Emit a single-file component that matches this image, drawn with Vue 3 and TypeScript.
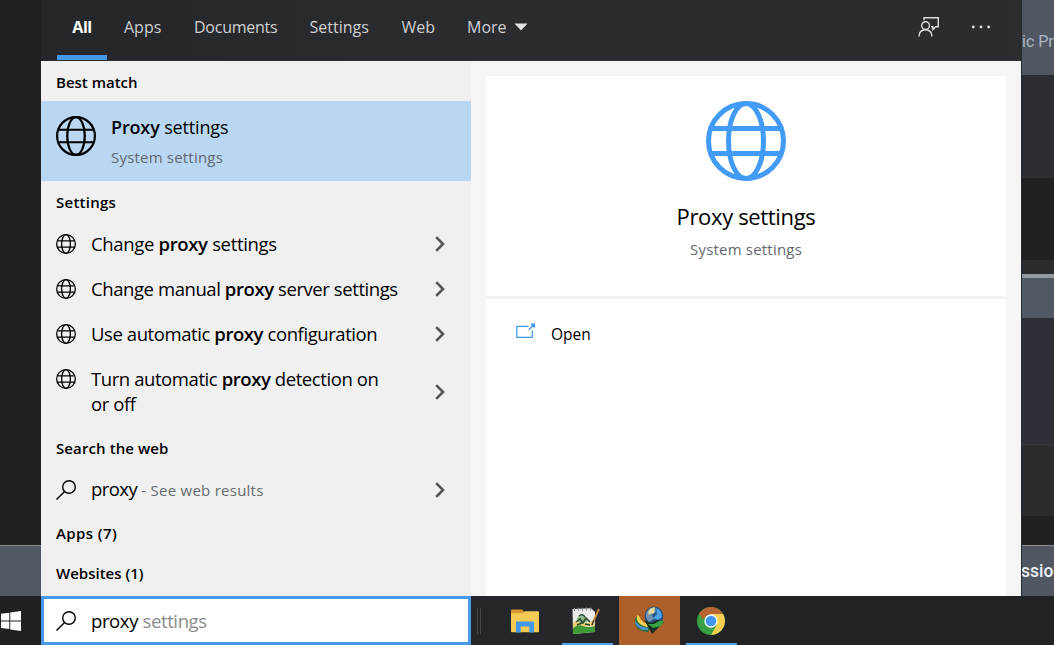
<script setup lang="ts">
import { defineComponent, h } from 'vue'

interface Tab { label: string; cls: string }
interface Result { lines: [string, string, string]; tail?: string; cls: string }

const tabs: Tab[] = [
  { label: 'All', cls: 'all' },
  { label: 'Apps', cls: 'apps' },
  { label: 'Documents', cls: 'documents' },
  { label: 'Settings', cls: 'settings' },
  { label: 'Web', cls: 'web' },
  { label: 'More', cls: 'more' },
]

const results: Result[] = [
  { lines: ['Change ', 'proxy', ' settings'], cls: 'r1' },
  { lines: ['Change manual ', 'proxy', ' server settings'], cls: 'r2' },
  { lines: ['Use automatic ', 'proxy', ' configuration'], cls: 'r3' },
  { lines: ['Turn automatic ', 'proxy', ' detection on'], tail: 'or off', cls: 'r4' },
]

const GlobeIcon = defineComponent({
  props: { weight: { type: Number, default: 5 } },
  setup(props) {
    return () =>
      h('svg', { viewBox: '0 0 80 80', fill: 'none', stroke: 'currentColor', 'stroke-width': props.weight }, [
        h('circle', { cx: 40, cy: 40, r: 40 - props.weight / 2 }),
        h('ellipse', { cx: 40, cy: 40, rx: 17.5, ry: 40 - props.weight / 2 }),
        h('path', { d: 'M5 27.5H75M5 52.5H75' }),
      ])
  },
})

const SearchIcon = defineComponent({
  setup() {
    return () =>
      h('svg', { viewBox: '0 0 20 20', fill: 'none', stroke: 'currentColor', 'stroke-width': 1.4 }, [
        h('circle', { cx: 13, cy: 7, r: 6.3 }),
        h('path', { d: 'M8.6 11.4L.5 19.5' }),
      ])
  },
})
</script>

<template>
  <div class="screen">
    <div class="desktop">
      <div class="backdrop-left"><div class="band"></div></div>

      <section class="flyout">
        <header class="tabs">
          <div v-for="tab in tabs" :key="tab.label" class="tab" :class="tab.cls">
            <span>{{ tab.label }}</span>
            <svg v-if="tab.label === 'More'" class="caret" viewBox="0 0 14 8"><path d="M.5.5H13.5L7 7.5Z" fill="#e4e4e4" /></svg>
          </div>
          <div class="spacer"></div>
          <svg class="feedback" viewBox="0 0 22 22" fill="none" stroke="#dcdcdc" stroke-width="1.4">
            <path d="M6 4.2V1.7H20.3V10.8H17.7L14.8 13.6V10.8H13" />
            <circle cx="7.6" cy="9.6" r="3.9" />
            <path d="M1 20.5C1.2 16.2 3.8 13.7 7.5 13.7S13.7 16.2 14 20.5" />
          </svg>
          <svg class="dots" viewBox="0 0 20 4" fill="#dcdcdc"><circle cx="2.3" cy="2" r="1.4" /><circle cx="10" cy="2" r="1.4" /><circle cx="17.7" cy="2" r="1.4" /></svg>
        </header>

        <div class="content">
          <div class="list">
            <h2 class="heading h-best">Best match</h2>
            <div class="best">
              <GlobeIcon class="globe-m" :weight="4.4" />
              <div class="best-text">
                <div class="best-title"><b>Proxy</b> settings</div>
                <div class="best-sub">System settings</div>
              </div>
            </div>
            <h2 class="heading h-settings">Settings</h2>
            <div v-for="r in results" :key="r.cls" class="row" :class="r.cls">
              <GlobeIcon class="globe-s" :weight="5.2" />
              <div class="row-text">
                <div class="line">{{ r.lines[0] }}<b>{{ r.lines[1] }}</b>{{ r.lines[2] }}</div>
                <div v-if="r.tail" class="line">{{ r.tail }}</div>
              </div>
              <svg class="chevron" viewBox="0 0 10 16" fill="none" stroke="#555" stroke-width="2.6"><path d="M1.2 1.2L8 8L1.2 14.8" /></svg>
            </div>
            <h2 class="heading h-web">Search the web</h2>
            <div class="row web-row">
              <SearchIcon class="search-s" />
              <div class="row-text"><span class="query">proxy</span><span class="hint"> - See web results</span></div>
              <svg class="chevron" viewBox="0 0 10 16" fill="none" stroke="#555" stroke-width="2.6"><path d="M1.2 1.2L8 8L1.2 14.8" /></svg>
            </div>
            <h2 class="heading h-apps">Apps (7)</h2>
            <h2 class="heading h-sites">Websites (1)</h2>
          </div>

          <div class="detail">
            <div class="card">
              <div class="hero">
                <GlobeIcon class="globe-l" :weight="5" />
                <div class="hero-title">Proxy settings</div>
                <div class="hero-sub">System settings</div>
              </div>
              <div class="action">
                <svg class="open-icon" viewBox="0 0 20 16" fill="none" stroke="#4299ea" stroke-width="1.3">
                  <path d="M12.5 3.3H.8V14.3H16.3V7.5M12.8 6.8L18.4 1.2" />
                  <path d="M14.8.6H19V4.8L17.2 4.2L15.4 2.4Z" fill="#4299ea" stroke="none" />
                </svg>
                <span>Open</span>
              </div>
            </div>
          </div>
        </div>
      </section>

      <div class="backdrop-right">
        <div class="b1"><span>ic Pr</span></div>
        <div class="b2"></div>
        <div class="b3"></div>
        <div class="b4"></div>
        <div class="b5"></div>
        <div class="b6"></div>
        <div class="b7"></div>
        <div class="b8"></div>
        <div class="b9"><span>ssio</span></div>
      </div>
    </div>

    <footer class="taskbar">
      <div class="start">
        <svg viewBox="0 0 21 21" fill="#fff"><path d="M0 3L8.7 1.8V9.9H0ZM9.7 1.6L21 0V9.9H9.7ZM0 10.9H8.7V19L0 17.8ZM9.7 10.9H21V21L9.7 19.3Z" /></svg>
      </div>
      <div class="searchbox">
        <SearchIcon class="search-s" />
        <div class="typed"><span>proxy</span><span class="ghost"> settings</span></div>
      </div>
      <div class="grip"></div>
      <div class="task explorer">
        <svg viewBox="0 0 28 24">
          <path d="M0 1.2Q0 .5.7.5H11L13.5 3V7H0Z" fill="#d99a35" />
          <path d="M0 4.3H11.5L14 2.3H27Q28 2.3 28 3.3V22.3Q28 23.3 27 23.3H1Q0 23.3 0 22.3Z" fill="#f4cc55" />
          <path d="M5 12.6H23V23.5H18.3V17.5H9.7V23.5H5Z" fill="#4299e8" />
        </svg>
      </div>
      <div class="task notepad running">
        <svg viewBox="0 0 28 28">
          <path d="M.5 2L19 1.2L23 5V25L1 27Z" fill="#e9eceb" />
          <path d="M2.5 1V4M6.5 .7V3.7M10.5 .7V3.7M14.5 .5V3.5M18.5 .5V3.5" stroke="#8a8e90" stroke-width="1.2" />
          <path d="M1 16Q5 12 10 15T22 13L23 19L1 20Z" fill="#efce75" />
          <path d="M1 21Q6 17 11 19T23 19V25L1 27Z" fill="#3e9a35" />
          <path d="M5 12Q6 8 10 9T16 12Q17 15 12 16Q6 17 5 12Z" fill="#8fbf86" />
          <path d="M4 15L8 12L11 16L14 11L18 15M7 9Q10 6 13 10M5 18L10 16M13 17L18 18" fill="none" stroke="#24452b" stroke-width="1.5" />
          <path d="M21 15L27 2" stroke="#c98942" stroke-width="1.8" />
          <path d="M20 18L21.8 13.5" stroke="#443a31" stroke-width="1.6" />
        </svg>
      </div>
      <div class="task idm">
        <svg viewBox="0 0 30 30">
          <path d="M3 10Q0 13 1 18Q4 26 14 26L18 20Q6 20 3 10Z" fill="#2d6e42" />
          <path d="M3 9Q1 18 13 21L16 18Q7 17 5 10Z" fill="#f0d050" />
          <path d="M1 17Q5 25 14 24V22Q5 21 1 15Z" fill="#4b94dc" />
          <circle cx="20" cy="10" r="9.4" fill="#27517b" />
          <path d="M12 7Q15 1 21 1L22 6L18 9L20 13L15 16Q11 12 12 7Z" fill="#6d93ae" />
          <path d="M15 4Q18 1 21 1.5L20 7L14 8.5Z" fill="#e6dc98" />
          <path d="M22 2Q28 4 28 11L24 14L19 12L23 8Z" fill="#4ca2ee" />
          <path d="M10 14L17 17L23 14L30 16L18 28L15 22Z" fill="#182c20" />
          <path d="M14 18L20 18L25 15L30 15L27 20L19 22Z" fill="#35a343" />
        </svg>
      </div>
      <div class="task chrome running">
        <svg viewBox="0 0 28 28">
          <circle cx="14" cy="14" r="14" fill="#37a143" />
          <path d="M14 7H26.1A14 14 0 0 1 14 28L20 17.5Z" fill="#f4cf52" />
          <path d="M1.9 7A14 14 0 0 1 26.1 7H14A7 7 0 0 0 7.5 11.5L5.8 12Z" fill="#b96531" />
          <circle cx="14" cy="14" r="6.7" fill="#f7fafc" />
          <circle cx="14" cy="14" r="5.3" fill="#4095ee" />
        </svg>
      </div>
    </footer>
  </div>
</template>

<style>
html, body { margin: 0; overflow: hidden; background: #202123; }
</style>

<style scoped>
* { box-sizing: border-box; }
.screen { width: 1054px; height: 645px; display: flex; flex-direction: column; overflow: hidden; font-family: "Open Sans", "Noto Sans", sans-serif; color: #000; white-space: nowrap; }
.desktop { height: 596px; display: flex; }
b { font-weight: 600; }
svg { display: block; flex: none; }

.backdrop-left { width: 41px; background: #202123; display: flex; flex-direction: column; justify-content: flex-end; }
.band { height: 51px; background: #505864; border-top: 1px solid #85898e; }

.flyout { width: 980px; display: flex; flex-direction: column; }
.tabs { height: 61px; background: linear-gradient(90deg, #25262a, #292b2f 40%, #2b2d31); display: flex; align-items: center; padding: 0 30px 0 16px; }
.tab { height: 61px; display: flex; align-items: center; color: #d0d0d1; font-size: 16px; padding-bottom: 7px; }
.tab.all { width: 50px; justify-content: center; color: #fff; font-weight: 700; box-shadow: inset 0 -1px #25262a, inset 0 -6px #4299ea; margin-right: 17px; letter-spacing: -.5px; }
.apps { width: 70px; }
.documents { width: 115.5px; letter-spacing: -.25px; }
.settings { width: 92px; }
.web { width: 65.5px; }
.more { gap: 7px; }
.caret { width: 14px; height: 8px; }
.spacer { flex: 1; }
.feedback { width: 22px; height: 22px; margin: 0 31px 7px 0; }
.dots { width: 20px; height: 4px; margin: 0 0 7px; }

.content { flex: 1; display: flex; }
.list { width: 430px; background: #f0f0f0; display: flex; flex-direction: column; }
.heading { margin: 0; padding: 2px 0 0 15px; height: 40px; font-size: 15px; line-height: 38px; font-weight: 600; }
.h-settings { padding-top: 2px; letter-spacing: .25px; }
.h-web { padding-top: 2px; letter-spacing: .1px; }
.h-apps { padding-top: 2px; letter-spacing: .4px; }
.best { height: 80px; background: #b9d7f3; display: flex; padding-left: 15px; gap: 15px; }
.globe-m { width: 40px; height: 40px; margin-top: 15px; }
.best-title { font-size: 18px; line-height: 26px; margin-top: 13px; letter-spacing: -.15px; }
.best-sub { font-size: 15px; line-height: 20px; margin-top: 7px; color: #61676e; letter-spacing: .2px; }
.row { height: 45px; display: flex; align-items: center; padding-left: 15px; font-size: 18.5px; line-height: 25px; letter-spacing: -.42px; }
.globe-s, .search-s { width: 20px; height: 20px; margin-right: 15px; }
.row-text { width: 310px; padding-bottom: 1px; }
.line { height: 25px; white-space: pre; }
.r1 { letter-spacing: -.34px; }
.chevron { width: 10px; height: 16px; margin-left: 34px; }
.r4 { height: 71px; }
.r4 .globe-s { margin-bottom: 25px; }
.web-row { letter-spacing: -.55px; }
.hint { font-size: 15px; color: #666a6e; letter-spacing: .25px; white-space: pre; }

.detail { width: 550px; background: #f5f5f5; padding: 15px 15px 0; display: flex; }
.card { flex: 1; background: #fff; }
.hero { height: 223px; border-bottom: 3px solid #f2f2f2; display: flex; flex-direction: column; align-items: center; }
.globe-l { width: 80px; height: 80px; margin-top: 25px; color: #429bf7; }
.hero-title { font-size: 22px; line-height: 30px; margin-top: 20px; letter-spacing: -.35px; }
.hero-sub { font-size: 15px; line-height: 20px; margin-top: 8px; color: #65686c; letter-spacing: .2px; }
.action { display: flex; align-items: center; height: 70px; padding-left: 30px; font-size: 15.5px; gap: 15px; }
.open-icon { width: 20px; height: 16px; margin-bottom: 7px; }

.backdrop-right { width: 33px; border-left: 1px solid #26282b; background: #2a2d30; display: flex; flex-direction: column; overflow: hidden; font-family: Roboto, sans-serif; }
.b1 { height: 75px; background: #505662; color: #a9b6c4; font-size: 16px; line-height: 83px; }
.b2 { height: 103px; background: #2b2e32; }
.b3 { height: 82px; background: #202122; }
.b4 { height: 14px; background: #2a2d30; }
.b5 { height: 4px; background: #929ba2; }
.b6 { height: 40px; background: #505864; }
.b7 { height: 198px; background: linear-gradient(#2c3036 0 126px, #393d40 126px 127px, #2a2d30 127px); }
.b8 { height: 29px; background: #202122; }
.b9 { height: 51px; border-top: 1px solid #898d93; background: #505662; color: #eef1f5; font-weight: 500; font-size: 17.5px; line-height: 51px; }
.b9 span { margin-left: -1px; }

.taskbar { height: 49px; background: linear-gradient(90deg, #202123, #25272a 55%, #202223 70%); display: flex; }
.start { width: 41px; padding: 15px 0 0 1px; }
.start svg { width: 20px; height: 20px; }
.searchbox { width: 430px; border: 3px solid #4599e8; background: #fff; display: flex; align-items: center; padding-left: 12px; font-size: 18.5px; letter-spacing: -.38px; }
.typed { white-space: pre; padding-bottom: 1px; }
.ghost { color: #8b8b8b; }
.grip { width: 4px; height: 26px; margin: 12px 0 0 6px; border: solid #46494c; border-width: 0 1px; }
.task { height: 49px; display: flex; justify-content: center; align-items: center; }
.explorer { width: 61px; margin-left: 13px; }
.explorer svg { width: 28px; height: 24px; }
.notepad { width: 51px; margin: 0 6px 0 7px; padding-right: 3px; }
.notepad svg, .chrome svg { width: 28px; height: 28px; }
.running { border-bottom: 2px solid #4da3ef; padding-top: 3px; }
.idm { width: 61px; background: #ae602a; padding-right: 1px; }
.idm svg { width: 30px; height: 30px; }
.chrome { width: 51px; margin-left: 6px; padding-right: 2px; }
</style>
